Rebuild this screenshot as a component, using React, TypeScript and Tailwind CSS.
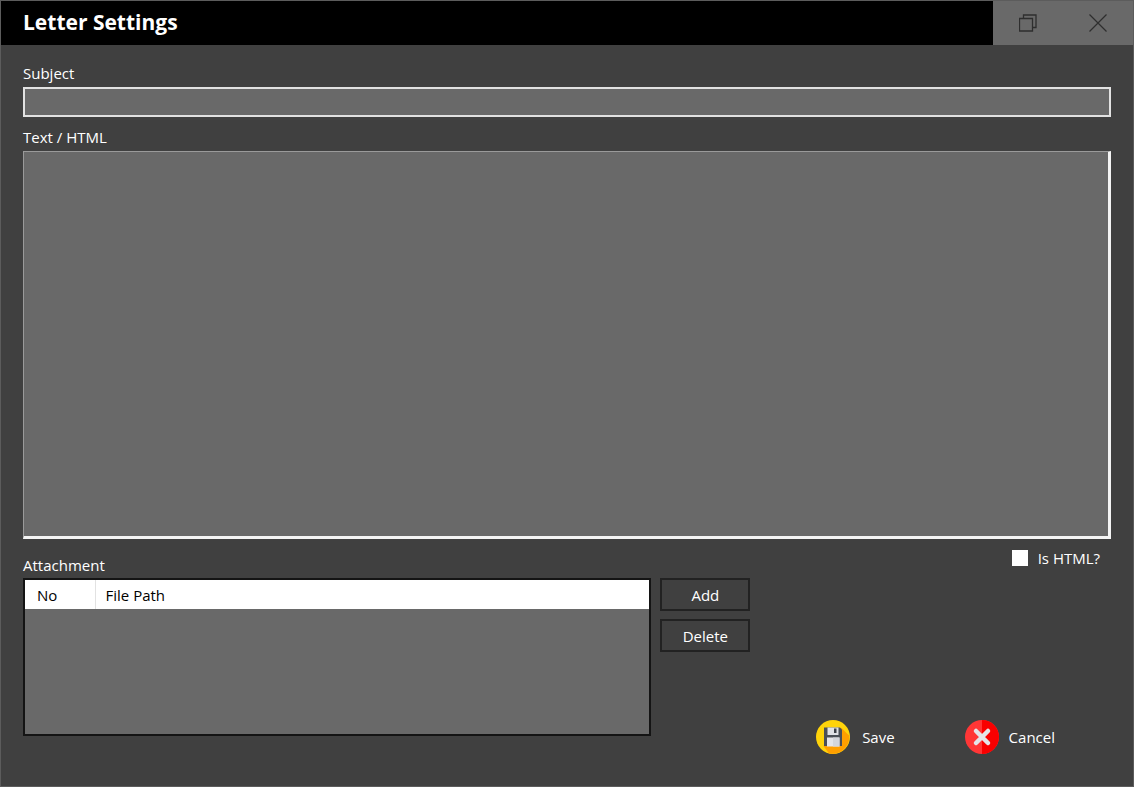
import { useState } from "react";
import type { ReactNode } from "react";

const LABELS = {
  title: "Letter Settings",
  subject: "Subject",
  body: "Text / HTML",
  isHtml: "Is HTML?",
  attachment: "Attachment",
} as const;

function RestoreIcon() {
  return (
    <svg className="size-[18px]" viewBox="0 0 18 18" fill="none" stroke="#2e2e2e" strokeWidth="1.3" aria-hidden="true">
      <path d="M0.5 4.5H13.5V17H0.5Z" />
      <path d="M4.5 4.5V1H17V13.5H13.5" />
    </svg>
  );
}

function CloseIcon() {
  return (
    <svg className="size-[18px]" viewBox="0 0 18 18" fill="none" stroke="#2e2e2e" strokeWidth="1.2" aria-hidden="true">
      <path d="M0.5 0.5L17.5 17.5M17.5 0.5L0.5 17.5" />
    </svg>
  );
}

function SaveIcon() {
  return (
    <svg className="size-[34px] shrink-0" viewBox="0 0 34 34" aria-hidden="true">
      <circle cx="17" cy="17" r="17" fill="#ffd30a" />
      {/* long shadow cast to the lower right */}
      <path d="M25.5 8L33.3 15.8A17 17 0 0 1 13 33.5L7.5 26Z" fill="#ff9f00" />
      <path d="M8 7.5H24L26 9.5V26H8Z" fill="#4a4f57" />
      <path d="M11.5 7.5H22.5V15H11.5Z" fill="#dfe1e6" />
      <path d="M18 8.5H20.5V13H18Z" fill="#3c4048" />
      <path d="M11 17.5H23.5V26.5H11Z" fill="#e4e5e9" />
      <path d="M17 17.5H23.5V26.5H17Z" fill="#d4d6dc" />
    </svg>
  );
}

function CancelIcon() {
  return (
    <svg className="size-[34px] shrink-0" viewBox="0 0 34 34" aria-hidden="true">
      <circle cx="17" cy="17" r="17" fill="#ff3636" />
      <path d="M17 0A17 17 0 0 1 17 34Z" fill="#f90000" />
      <path d="M11 11L23 23M23 11L11 23" stroke="#e4e4e8" strokeWidth="4.5" strokeLinecap="round" />
    </svg>
  );
}

function FlatButton({ children }: { children: ReactNode }) {
  return (
    <button type="button" className="flex h-[33px] items-center justify-center border-2 border-[#222222] bg-[#404040] hover:bg-[#4c4c4c]">
      {children}
    </button>
  );
}

export default function App() {
  const [subject, setSubject] = useState("");
  const [body, setBody] = useState("");
  const [isHtml, setIsHtml] = useState(false);

  return (
    <div className="flex min-h-screen flex-col border border-[#5c5c5c] bg-[#404040] font-['Open_Sans','Noto_Sans',sans-serif] text-[15px] leading-6 text-white">
      <header className="flex h-11 bg-black">
        <h1 className="flex-1 pt-1.5 pl-[22px] text-[21px] leading-[30px] font-bold">{LABELS.title}</h1>
        <button type="button" aria-label="Restore" className="flex w-[70px] items-center justify-center bg-[#696969]">
          <RestoreIcon />
        </button>
        <button type="button" aria-label="Close" className="flex w-[70px] items-center justify-center bg-[#696969]">
          <CloseIcon />
        </button>
      </header>

      <main className="flex flex-1 flex-col px-[22px] pt-4 pb-8">
        <label htmlFor="subject">{LABELS.subject}</label>
        <input
          id="subject"
          type="text"
          value={subject}
          onChange={(e) => setSubject(e.target.value)}
          className="mt-0.5 h-[30px] border-2 border-[#e2e2e2] bg-[#696969] px-2 outline-none"
        />

        <label htmlFor="body" className="mt-2">
          {LABELS.body}
        </label>
        <textarea
          id="body"
          value={body}
          onChange={(e) => setBody(e.target.value)}
          className="mt-0.5 min-h-40 flex-1 resize-none border-t border-r-3 border-b-3 border-l border-t-[#9a9a9a] border-r-[#f4f4f4] border-b-[#f4f4f4] border-l-[#9a9a9a] bg-[#696969] px-2 outline-none"
        />

        <div className="grid grid-cols-[629fr_90px_352fr] gap-[9px]">
          <section className="mb-[18px] pt-3.5">
            <h2 id="attachment" className="pb-px">{LABELS.attachment}</h2>
            <div className="h-[158px] border-2 border-[#141414] bg-[#696969]">
              <table aria-labelledby="attachment" className="w-full table-fixed bg-white text-left text-black">
                <thead>
                  <tr className="h-[29px]">
                    <th className="w-[70px] border-r border-[#e2e2e2] pl-3 font-normal">No</th>
                    <th className="pl-2.5 font-normal">File Path</th>
                  </tr>
                </thead>
              </table>
            </div>
          </section>

          <div className="flex flex-col gap-2 pt-[39px]">
            <FlatButton>Add</FlatButton>
            <FlatButton>Delete</FlatButton>
          </div>

          <div className="flex flex-col items-end justify-between">
            <label className="mt-[7px] mr-[11px] flex items-center gap-2.5">
              <input
                type="checkbox"
                checked={isHtml}
                onChange={(e) => setIsHtml(e.target.checked)}
                className="size-4 appearance-none bg-white checked:bg-[#3b82f6]"
              />
              {LABELS.isHtml}
            </label>
            <div className="flex gap-[70px] pr-14">
              <button type="button" className="flex items-center gap-3">
                <SaveIcon />
                Save
              </button>
              <button type="button" className="flex items-center gap-2.5">
                <CancelIcon />
                Cancel
              </button>
            </div>
          </div>
        </div>
      </main>
    </div>
  );
}
